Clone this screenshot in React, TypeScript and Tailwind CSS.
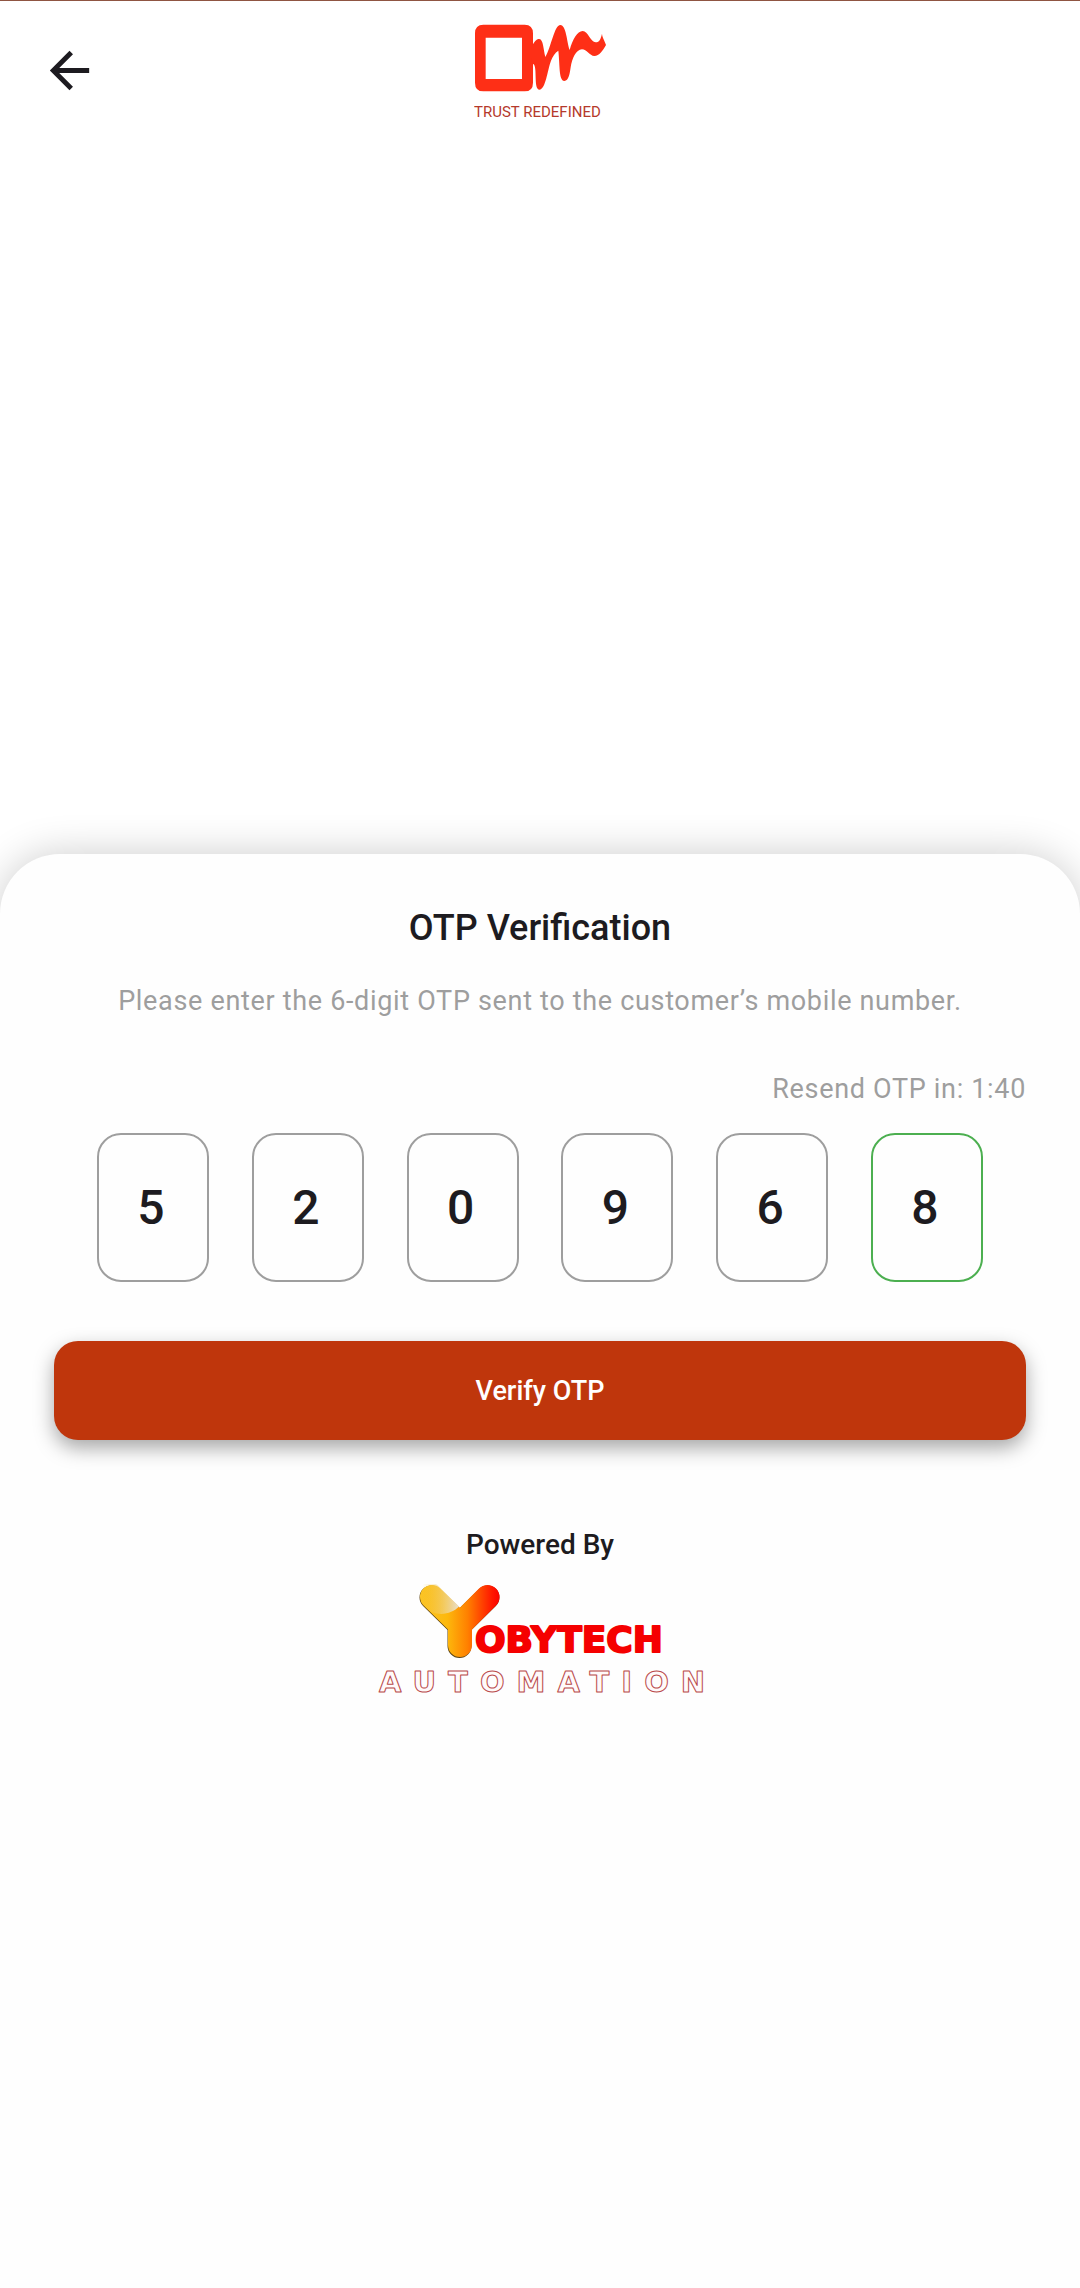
import { useState } from "react";
import { MdArrowBack } from "react-icons/md";

const INITIAL_CODE = ["5", "2", "0", "9", "6", "8"];

export default function App() {
  return (
    <div className="grid min-h-screen grid-rows-[853fr_1433fr] overflow-hidden border-t border-[#8f5542] bg-white font-['Roboto',sans-serif] text-[#1d1b20]">
      <TopBar />
      <main className="rounded-t-[60px] bg-[#fefefe] px-[54px] pt-[49px] shadow-[0_0_40px_rgba(0,0,0,0.2)]">
        <OtpForm />
        <PoweredBy />
      </main>
    </div>
  );
}

function TopBar() {
  return (
    <header className="grid grid-cols-[1fr_auto_1fr] items-start px-10">
      <button type="button" aria-label="Back" className="mt-10 justify-self-start">
        <MdArrowBack size={59} />
      </button>
      <TrustLogo />
    </header>
  );
}

function OtpForm() {
  const [code, setCode] = useState(INITIAL_CODE);

  const setDigit = (index: number, value: string) => {
    setCode((prev) => prev.map((d, i) => (i === index ? value.replace(/\D/g, "") : d)));
  };

  return (
    <form onSubmit={(e) => e.preventDefault()}>
      <h1 className="text-center text-[36px] leading-[50px] font-medium">OTP Verification</h1>
      <p className="mt-7 text-center text-[27px] leading-10 tracking-wide text-[#9e9e9e]">
        Please enter the 6-digit OTP sent to the customer’s mobile number.
      </p>
      <p className="mt-12 text-right text-[27px] leading-10 tracking-wide text-[#9e9e9e]">
        Resend OTP in: 1:40
      </p>

      <div className="mt-6 flex justify-between px-[43px]">
        {code.map((digit, i) => (
          <input
            key={i}
            type="text"
            inputMode="numeric"
            maxLength={1}
            aria-label={`Digit ${i + 1}`}
            value={digit}
            onChange={(e) => setDigit(i, e.target.value)}
            className={`h-[149px] w-28 rounded-3xl border-2 pr-1 text-center text-[48px] font-medium outline-none ${
              i === code.length - 1 ? "border-[#4caf50]" : "border-[#9e9e9e]"
            }`}
          />
        ))}
      </div>

      <button
        type="submit"
        className="mt-[59px] h-[99px] w-full rounded-3xl bg-[#bf360c] text-[27px] font-medium text-white shadow-[0_8px_20px_rgba(0,0,0,0.35)]"
      >
        Verify OTP
      </button>
    </form>
  );
}

function PoweredBy() {
  return (
    <footer className="mt-[85px] flex flex-col items-center">
      <p className="text-[28px] leading-10 font-medium">Powered By</p>
      <YobytechLogo />
    </footer>
  );
}

function TrustLogo() {
  return (
    <svg
      width="132"
      height="100"
      viewBox="0 0 132 100"
      role="img"
      aria-label="Trust Redefined"
      className="mt-[23px]"
    >
      <g fill="#fe2f16" transform="scale(0.33333) translate(-102 -72)">
        <path
          fillRule="evenodd"
          d="M130 74H254Q279 74 279 100V248Q279 274 254 274H130Q105 274 105 248V100Q105 74 130 74ZM137 113V237H246V113Z"
        />
        <path d="M276 138C284 122 291 117 298 117C310 118 310 148 316 171C334 140 343 75 361 75C379 76 380 124 389 150C398 118 412 93 428 93C444 93 452 127 467 127C479 127 482 117 486 101C487 113 493 120 498 135C489 151 478 168 463 168C449 168 440 148 426 148C408 149 396 176 392 202C389 222 386 243 373 243C356 241 360 196 355 152C345 158 338 170 333 182C322 212 317 268 298 269C285 268 288 232 286 210C285 196 282 192 276 190Z" />
      </g>
      <text x="0" y="93" fill="#b5392b" className="font-['Roboto',sans-serif] text-[15px]">
        TRUST REDEFINED
      </text>
    </svg>
  );
}

function YobytechLogo() {
  return (
    <svg width="380" height="124" viewBox="350 1583 380 124" className="mt-[18px]">
      <defs>
        <linearGradient id="y-body" gradientUnits="userSpaceOnUse" x1="419" y1="0" x2="500" y2="0">
          <stop offset="0" stopColor="#fbc526" />
          <stop offset="0.35" stopColor="#fdb80c" />
          <stop offset="0.6" stopColor="#ff8000" />
          <stop offset="0.9" stopColor="#ff1800" />
          <stop offset="1" stopColor="#fb0000" />
        </linearGradient>
        <linearGradient id="y-sheen" gradientUnits="userSpaceOnUse" x1="422" y1="0" x2="459" y2="0">
          <stop offset="0" stopColor="#f3c648" stopOpacity="0" />
          <stop offset="1" stopColor="#e8e2d0" />
        </linearGradient>
        <clipPath id="y-arm">
          <path d="M420 1601A12 12 0 0 1 440.400 1588L460 1607.500L470 1617L450 1632Z" />
        </clipPath>
      </defs>
      <g fill="none" strokeWidth="24" strokeLinecap="round">
        <path d="M431.500 1597.500L459.500 1625V1646M459.500 1625L487.500 1597.500" stroke="#5d4312" />
        <path d="M432 1597L460 1624.500V1645M460 1624.500L487.500 1597" stroke="url(#y-body)" />
      </g>
      <path
        d="M419 1584H462L459.500 1606C450 1616 434 1617 422 1606Z"
        fill="url(#y-sheen)"
        clipPath="url(#y-arm)"
      />
      <text
        x="475"
        y="1652"
        fill="#f50000"
        stroke="#f50000"
        strokeWidth="2"
        strokeLinejoin="round"
        className="font-['DejaVu_Sans',sans-serif] text-[36px] font-bold"
      >
        OBYTECH
      </text>
      <text
        x="379"
        y="1692"
        fill="#fffafa"
        stroke="#b94a4a"
        strokeWidth="1"
        strokeLinejoin="round"
        className="font-['DejaVu_Sans',sans-serif] text-[29px] font-bold tracking-[12px]"
      >
        AUTOMATION
      </text>
    </svg>
  );
}
